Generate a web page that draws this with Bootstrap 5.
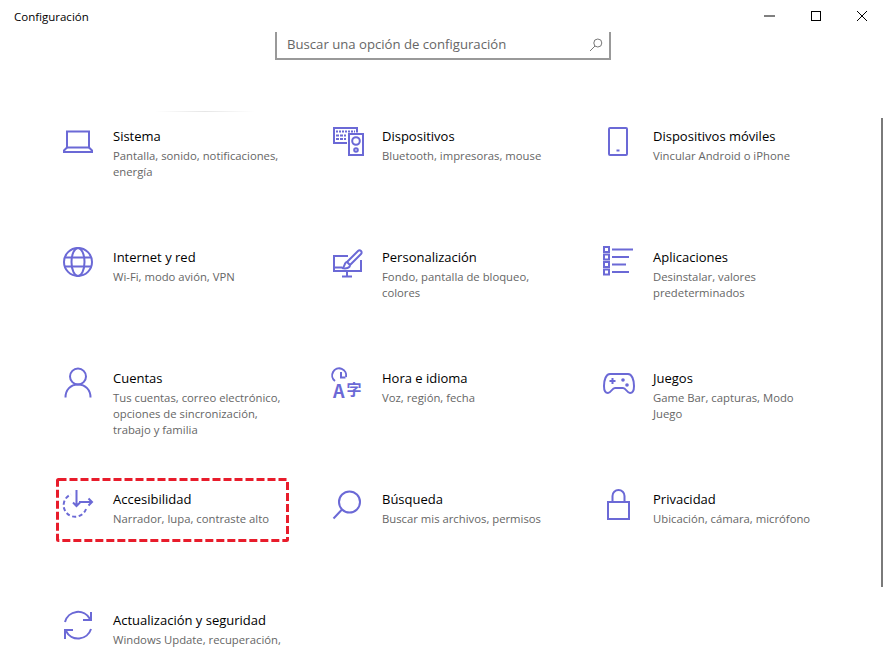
<!DOCTYPE html>
<html lang="es">
<head>
  <meta charset="UTF-8">
  <title>Configuración</title>
  <link href="https://cdn.jsdelivr.net/npm/bootstrap@5.3.3/dist/css/bootstrap.min.css" rel="stylesheet">
  <style>
    html, body { height: 652px; overflow: hidden; background: #fff; }
    body { font-family: "Open Sans", "Liberation Sans", sans-serif; color: #000; position: relative; }
    .app-bar { height: 32px; padding-left: 14px; }
    .app-title { font-size: 11.5px; line-height: 34px; }
    .win-btn { width: 46px; height: 32px; }
    .search-box { width: 336px; height: 28px; margin: 0 0 66px 275px; border: 2px solid #999; border-top: 0; padding: 0 6px 1px 10px; }
    .search-text { font-size: 13.15px; color: #666; }
    .fade-line { position: absolute; left: 155px; top: 111px; width: 100px; height: 1px; background: linear-gradient(90deg, #fff, #e6e6e6, #fff); }
    .tile-grid { display: grid; grid-template-columns: 270px 271px 270px; grid-auto-rows: 121px; padding-left: 62px; }
    .tile { position: relative; gap: 18px; }
    .tile:nth-child(3n+1) { gap: 19px; }
    .tile > svg { width: 32px; height: 32px; flex: none; fill: none; stroke: #6b69d6; stroke-width: 2; overflow: visible; }
    .tile-name { font-size: 13px; line-height: 20px; margin-bottom: 2px; }
    .tile-desc { font-size: 11.3px; line-height: 16px; color: #666; width: 170px; }
    .tile > .mark-box { position: absolute; left: -6px; top: -11px; width: 233px; height: 64px; fill: none; stroke: #e81c2b; stroke-width: 3; stroke-dasharray: 8 3; }
    .scroll-thumb { position: absolute; left: 881px; top: 118px; width: 2px; height: 469px; background: #7a7a7a; }
    .ico-fill { fill: #6b69d6; stroke: none; }
    .ico-text { fill: #6b69d6; stroke: none; font-family: "Noto Sans CJK JP", sans-serif; font-weight: 700; }
  </style>
</head>
<body>
  <div class="app-bar d-flex justify-content-between">
    <div class="app-title">Configuración</div>
    <div class="d-flex">
      <div class="win-btn d-flex align-items-center justify-content-center">
        <svg width="12" height="12" viewBox="0 0 12 12"><path d="M0 6h11" stroke="#000" fill="none"/></svg>
      </div>
      <div class="win-btn d-flex align-items-center justify-content-center">
        <svg width="12" height="12" viewBox="0 0 12 12"><rect x="1.500" y="1.500" width="9" height="9" stroke="#000" fill="none"/></svg>
      </div>
      <div class="win-btn d-flex align-items-center justify-content-center">
        <svg width="12" height="12" viewBox="0 0 12 12"><path d="M1 1l10 10M11 1L1 11" stroke="#000" fill="none"/></svg>
      </div>
    </div>
  </div>

  <div class="search-box d-flex align-items-center justify-content-between">
    <span class="search-text">Buscar una opción de configuración</span>
    <svg width="14" height="14" viewBox="0 0 14 14" fill="none" stroke="#777"><circle cx="8.800" cy="5" r="4"/><path d="M6 8L1 13"/></svg>
  </div>
  <div class="fade-line"></div>

  <div class="tile-grid">
    <div class="tile d-flex">
      <svg viewBox="0 0 32 32"><rect x="5" y="5.500" width="22" height="16"/><path d="M5 21.500L2 24.500V26H30V24.500L27 21.500"/></svg>
      <div>
        <div class="tile-name">Sistema</div>
        <div class="tile-desc">Pantalla, sonido, notificaciones, energía</div>
      </div>
    </div>
    <div class="tile d-flex">
      <svg viewBox="0 0 32 32"><path d="M15 17H2V2H25V6.500"/><rect x="17" y="8" width="14" height="21"/><circle cx="24" cy="15" r="3.800"/><circle cx="24" cy="24" r="1.800"/><path d="M4 5.500h19" stroke-dasharray="2 1"/><path d="M4 9.500h10M4 13h10" stroke-dasharray="3 1"/></svg>
      <div>
        <div class="tile-name">Dispositivos</div>
        <div class="tile-desc">Bluetooth, impresoras, mouse</div>
      </div>
    </div>
    <div class="tile d-flex">
      <svg viewBox="0 0 32 32"><rect x="6" y="2" width="18" height="27" rx="1"/><path d="M13.500 24.500h3"/></svg>
      <div>
        <div class="tile-name">Dispositivos móviles</div>
        <div class="tile-desc">Vincular Android o iPhone</div>
      </div>
    </div>

    <div class="tile d-flex">
      <svg viewBox="0 0 32 32"><circle cx="16" cy="15" r="14"/><ellipse cx="16" cy="15" rx="6.500" ry="14"/><path d="M3 10.500h26M3 19.500h26"/></svg>
      <div>
        <div class="tile-name">Internet y red</div>
        <div class="tile-desc">Wi-Fi, modo avión, VPN</div>
      </div>
    </div>
    <div class="tile d-flex">
      <svg viewBox="0 0 32 32"><path d="M16 9H2V24H29V13M15 24V29M10 29.500H20M3 20.500H10"/><path d="M15 15L26 4a2.100 2.100 0 0 1 3 3L18 18"/><path d="M10 21c3 0 2-6 5-6l3 3c0 3-4 4-8 3z"/></svg>
      <div>
        <div class="tile-name">Personalización</div>
        <div class="tile-desc">Fondo, pantalla de bloqueo, colores</div>
      </div>
    </div>
    <div class="tile d-flex">
      <svg viewBox="0 0 32 32"><path d="M9 2.500H30M9 10H26M9 17.500H23M9 25H26"/><rect x="1" y="0" width="5" height="5"/><rect x="1" y="7.500" width="5" height="5"/><rect x="1" y="15" width="5" height="5"/><rect x="1" y="22.500" width="5" height="5"/></svg>
      <div>
        <div class="tile-name">Aplicaciones</div>
        <div class="tile-desc">Desinstalar, valores predeterminados</div>
      </div>
    </div>

    <div class="tile d-flex">
      <svg viewBox="0 0 32 32"><circle cx="16" cy="8.500" r="8"/><path d="M3.500 29.500c0-7.500 5-13 12.500-13s12.500 5.500 12.500 13"/></svg>
      <div>
        <div class="tile-name">Cuentas</div>
        <div class="tile-desc">Tus cuentas, correo electrónico, opciones de sincronización, trabajo y familia</div>
      </div>
    </div>
    <div class="tile d-flex">
      <svg viewBox="0 0 32 32"><path d="M3 13A7 7 0 1 1 14 9"/><path d="M9 4v5.500H13.500"/><text class="ico-text" x="1" y="30" font-size="18">A</text><text class="ico-text" x="14.500" y="27" font-size="15">字</text></svg>
      <div>
        <div class="tile-name">Hora e idioma</div>
        <div class="tile-desc">Voz, región, fecha</div>
      </div>
    </div>
    <div class="tile d-flex">
      <svg viewBox="0 0 32 32"><path d="M7 6H25C29 6 31 12 31 18C31 23 29 25 27 25C24 25 23 20 20 20H12C9 20 8 25 5 25C3 25 1 23 1 18C1 12 3 6 7 6Z"/><path d="M6.500 13h6M9.500 10v6"/><circle class="ico-fill" cx="20" cy="12" r="1.800"/><circle class="ico-fill" cx="24" cy="17" r="1.800"/></svg>
      <div>
        <div class="tile-name">Juegos</div>
        <div class="tile-desc">Game Bar, capturas, Modo Juego</div>
      </div>
    </div>

    <div class="tile d-flex">
      <svg viewBox="0 0 32 32"><path d="M24 20A11.500 11.500 0 1 1 9 5.500" stroke-dasharray="4 2.500"/><path d="M14.500 1V16.500M11 13.500l3.500 3.500 3.500-3.500"/><path d="M17 13H30M26.500 9.500L30 13l-3.500 3.500"/></svg>
      <div>
        <div class="tile-name">Accesibilidad</div>
        <div class="tile-desc">Narrador, lupa, contraste alto</div>
      </div>
      <svg class="mark-box" viewBox="0 0 233 64"><rect x="1.500" y="1.500" width="230" height="61" rx="1"/></svg>
    </div>
    <div class="tile d-flex">
      <svg viewBox="0 0 32 32"><circle cx="17.500" cy="13" r="10.500"/><path d="M10 20.500L1.500 29.500"/></svg>
      <div>
        <div class="tile-name">Búsqueda</div>
        <div class="tile-desc">Buscar mis archivos, permisos</div>
      </div>
    </div>
    <div class="tile d-flex">
      <svg viewBox="0 0 32 32"><rect x="5" y="13" width="21" height="17"/><path d="M9.500 13V7a6 6 0 0 1 12 0v6"/></svg>
      <div>
        <div class="tile-name">Privacidad</div>
        <div class="tile-desc">Ubicación, cámara, micrófono</div>
      </div>
    </div>

    <div class="tile d-flex">
      <svg viewBox="0 0 32 32"><path d="M3 12A13.500 13.500 0 0 1 28 9"/><path d="M29 2V10H21"/><path d="M29 19A13.500 13.500 0 0 1 4 21"/><path d="M3 29V20H11"/></svg>
      <div>
        <div class="tile-name">Actualización y seguridad</div>
        <div class="tile-desc">Windows Update, recuperación, copia de seguridad</div>
      </div>
    </div>
  </div>
  <div class="scroll-thumb"></div>
  <script src="https://cdn.jsdelivr.net/npm/bootstrap@5.3.3/dist/js/bootstrap.bundle.min.js"></script>
</body>
</html>
